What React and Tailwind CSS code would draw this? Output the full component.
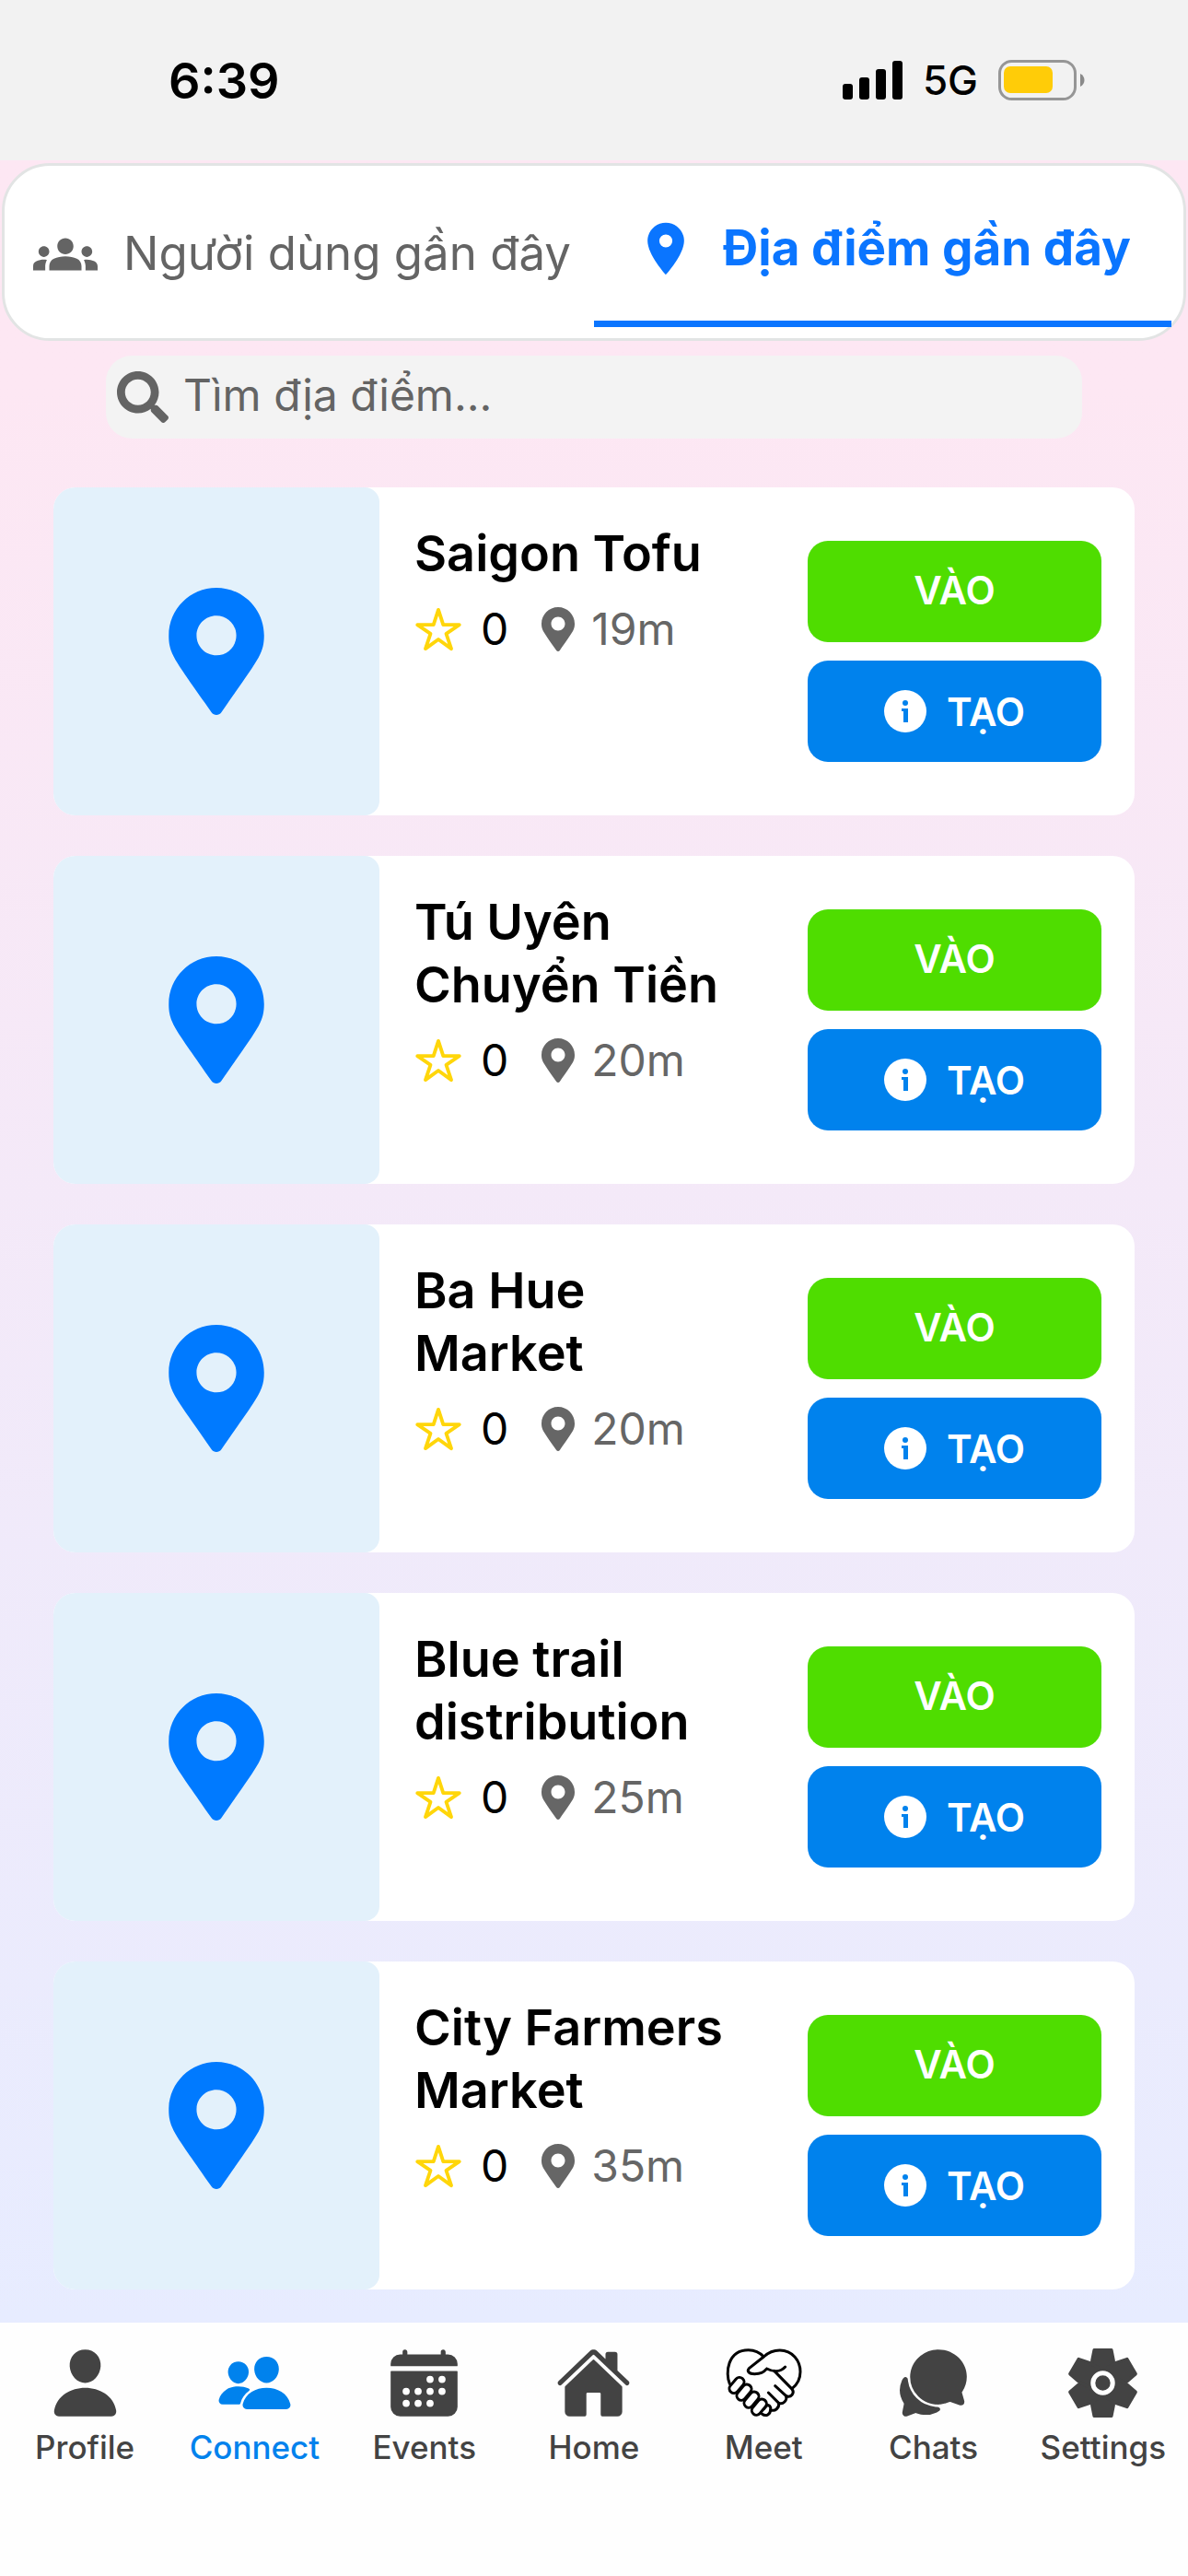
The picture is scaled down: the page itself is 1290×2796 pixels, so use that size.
import React, { useState } from "react";
import { FaMapMarkerAlt, FaSearch } from "react-icons/fa";
import { MdGroups, MdLocationOn } from "react-icons/md";
import {
  IoCalendar,
  IoChatbubbles,
  IoHome,
  IoPeople,
  IoPerson,
  IoStarOutline,
} from "react-icons/io5";

const places = [
  { id: 1, name: "Saigon Tofu", rating: 0, distance: "19m" },
  { id: 2, name: "Tú Uyên Chuyển Tiền", rating: 0, distance: "20m" },
  { id: 3, name: "Ba Hue Market", rating: 0, distance: "20m" },
  { id: 4, name: "Blue trail distribution", rating: 0, distance: "25m" },
  { id: 5, name: "City Farmers Market", rating: 0, distance: "35m" },
];

const InfoIcon = ({ className }) => (
  <svg viewBox="0 0 46 46" className={className} fill="currentColor">
    <circle cx="23" cy="23" r="23" />
    <circle cx="23" cy="14" r="3" fill="#0082ed" />
    <path d="M19 20h7v15h-5V23h-2z" fill="#0082ed" />
  </svg>
);

const MeetIcon = ({ className }) => (
  <svg
    viewBox="56 53 249 249"
    className={className}
    fill="none"
    stroke="black"
    strokeWidth="9"
    strokeLinecap="round"
    strokeLinejoin="round"
  >
    <path d="M69 180C54 145 62 70 130 70c20 0 38 9 50 22" />
    <path d="M190 131c20 10 44 12 60-6M190 131c-12 13-20 17-40 17-18 0-26-8-18-18l48-38c14-13 32-21 52-21 42 0 67 35 67 70 0 22-10 42-27 55" />
    <path d="M214 138l56 57c14 16-2 31-17 25 4 14-10 29-24 23 2 15-12 29-27 22-1 16-15 23-28 13" />
    <path d="M217 187l36 33M195 209l34 34M180 262l9-10c8-6 16 4 13 13" />
    <rect x="-15" y="-29" width="30" height="58" rx="15" transform="translate(92 185) rotate(40)" fill="white" />
    <rect x="-15" y="-29" width="30" height="58" rx="15" transform="translate(116 208) rotate(40)" fill="white" />
    <rect x="-15" y="-29" width="30" height="58" rx="15" transform="translate(140 232) rotate(40)" fill="white" />
    <rect x="-15" y="-29" width="30" height="58" rx="15" transform="translate(165 256) rotate(40)" fill="white" />
  </svg>
);

const SettingsIcon = ({ className }) => (
  <svg viewBox="-124 -124 248 248" className={className} fill="currentColor">
    <g stroke="currentColor" strokeWidth="10" strokeLinejoin="round">
      <path d="M-28-107H28L35-72V72L28 107H-28L-35 72V-72Z" />
      <path d="M-28-107H28L35-72V72L28 107H-28L-35 72V-72Z" transform="rotate(60)" />
      <path d="M-28-107H28L35-72V72L28 107H-28L-35 72V-72Z" transform="rotate(120)" />
    </g>
    <circle r="32" fill="none" stroke="white" strokeWidth="15" />
  </svg>
);

const navItems = [
  { label: "Profile", icon: IoPerson },
  { label: "Connect", icon: IoPeople },
  { label: "Events", icon: IoCalendar },
  { label: "Home", icon: IoHome },
  { label: "Meet", icon: MeetIcon },
  { label: "Chats", icon: IoChatbubbles },
  { label: "Settings", icon: SettingsIcon },
];

const StatusBar = () => (
  <header className="flex h-[174px] items-center justify-between bg-[#f2f2f2] pl-[183px] pr-[112px] text-black">
    <span className="text-[54px] font-semibold">6:39</span>
    <div className="flex items-center gap-[22px]">
      <svg viewBox="0 0 65 42" className="h-[42px] w-[65px]">
        <rect x="0" y="25" width="11" height="17" rx="3" />
        <rect x="18" y="18" width="11" height="24" rx="3" />
        <rect x="36" y="9" width="11" height="33" rx="3" />
        <rect x="54" y="0" width="11" height="42" rx="3" />
      </svg>
      <span className="text-[44px] font-medium">5G</span>
      <svg viewBox="0 0 94 44" className="h-11 w-[94px]">
        <rect x="1.5" y="1.5" width="82" height="41" rx="13" fill="none" stroke="#969696" strokeWidth="3" />
        <rect x="6" y="7" width="53" height="29" rx="7" fill="#ffcc08" />
        <path d="M89 15c6 3 6 11 0 14z" fill="#8a8a8a" />
      </svg>
    </div>
  </header>
);

const Tabs = ({ tab, setTab }) => (
  <div
    role="tablist"
    className="mx-0.5 mt-[3px] grid h-[193px] grid-cols-2 rounded-[52px] border-[3px] border-[#e2e4e4] bg-white px-[13px] pb-3"
  >
    <button
      role="tab"
      aria-selected={tab === "users"}
      onClick={() => setTab("users")}
      className="flex items-center gap-7 pl-[18px] pt-4 text-[51px] whitespace-nowrap text-[#646464]"
    >
      <MdGroups className="size-[70px] shrink-0" />
      Người dùng gần đây
    </button>
    <button
      role="tab"
      aria-selected={tab === "places"}
      onClick={() => setTab("places")}
      className="flex items-center justify-center gap-7 border-b-[7px] border-[#0a75ff] pt-3 text-[53px] font-bold whitespace-nowrap text-[#0a75ff]"
    >
      <MdLocationOn className="size-[68px] shrink-0" />
      Địa điểm gần đây
    </button>
  </div>
);

const PlaceCard = ({ place }) => (
  <li className="flex h-[356px] overflow-hidden rounded-3xl bg-white">
    <div className="flex w-[354px] shrink-0 items-center justify-center rounded-r-2xl bg-[#e3f1fb]">
      <FaMapMarkerAlt className="size-[138px] text-[#007aff]" />
    </div>
    <div className="flex-1 pl-[38px] pr-14 pt-[38px]">
      <h2 className="text-[54px] leading-[68px] font-semibold text-black">
        {place.name}
      </h2>
      <div className="mt-4 flex items-center text-[48px] leading-[64px]">
        <IoStarOutline className="size-[52px] text-[#ffd60a] [&_path]:stroke-[38px]" />
        <span className="ml-5 text-black">{place.rating}</span>
        <FaMapMarkerAlt className="ml-[30px] size-12 text-[#666666]" />
        <span className="ml-3 text-[#666666]">{place.distance}</span>
      </div>
    </div>
    <div className="flex w-[355px] shrink-0 flex-col gap-5 pt-[58px] pr-9 text-[42px] font-semibold text-white">
      <button className="flex h-[110px] items-center justify-center rounded-[22px] bg-[#4fdd00] pb-1">
        VÀO
      </button>
      <button className="flex h-[110px] items-center justify-center gap-[22px] rounded-[22px] bg-[#0082ed]">
        <InfoIcon className="size-[46px]" />
        TẠO
      </button>
    </div>
  </li>
);

const App = () => {
  const [tab, setTab] = useState("places");
  const [query, setQuery] = useState("");
  const [page, setPage] = useState("Connect");

  return (
    <div className="flex min-h-screen flex-col bg-linear-to-b from-[#fde7f3] from-15% to-[#e7ecff] to-90% font-['Inter','Liberation_Sans',sans-serif]">
      <StatusBar />
      <Tabs tab={tab} setTab={setTab} />

      <label className="mx-[115px] mt-4 flex h-[90px] items-center rounded-[28px] bg-[#f3f3f3] px-3 text-[#646464]">
        <FaSearch className="size-[56px] shrink-0" />
        <input
          type="text"
          aria-label="Tìm địa điểm"
          placeholder="Tìm địa điểm..."
          value={query}
          onChange={(e) => setQuery(e.target.value)}
          className="ml-4 w-full bg-transparent pb-1 text-[48px] outline-none placeholder:text-[#646464]"
        />
      </label>

      <ul className="mt-[53px] flex flex-1 flex-col gap-11 px-[58px]">
        {places.map((place) => (
          <PlaceCard key={place.id} place={place} />
        ))}
      </ul>

      <nav className="mt-9 flex h-[275px] bg-[#fefefe] pt-6">
        {navItems.map(({ label, icon: Icon }) => (
          <button
            key={label}
            onClick={() => setPage(label)}
            className={
              page === label
                ? "flex flex-1 basis-0 flex-col items-center text-[#0082ed]"
                : "flex flex-1 basis-0 flex-col items-center text-[#434343]"
            }
          >
            <Icon className="size-[83px]" />
            <span className="mt-1.5 text-[35px] leading-[44px] font-medium">{label}</span>
          </button>
        ))}
      </nav>
    </div>
  );
};

export default App;
